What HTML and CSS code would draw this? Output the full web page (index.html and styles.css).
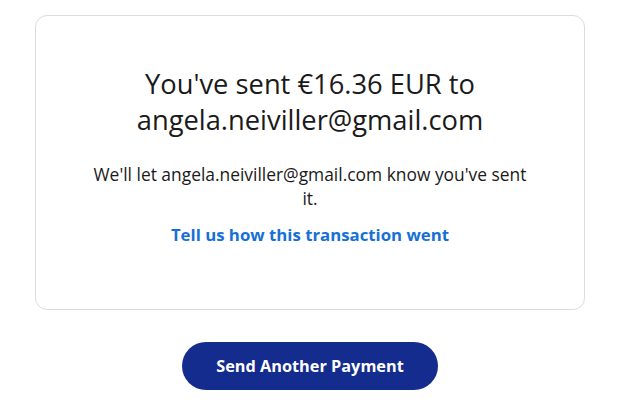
FILE: index.html
```html
<!DOCTYPE html>
<html lang="en">
<head>
  <meta charset="UTF-8">
  <meta name="viewport" content="width=device-width, initial-scale=1.0">
  <title>Payment Sent</title>
  <link rel="stylesheet" href="styles.css">
</head>
<body>
  <div class="page">
    <div class="card">
      <h1 class="title">You've sent €16.36 EUR to angela.neiviller@gmail.com</h1>
      <p class="note">We'll let angela.neiviller@gmail.com know you've sent it.</p>
      <a class="feedback" href="#">Tell us how this transaction went</a>
    </div>
    <div class="actions">
      <button class="send-again">Send Another Payment</button>
    </div>
  </div>
</body>
</html>
```

FILE: styles.css
```css
body {
  font-family: "Open Sans", Lato, sans-serif;
  background-color: #ffffff;
  margin: 0;
  padding: 0;
  color: #1a1a1a;
}
.page {
  padding: 15px 49px 0 35px;
}
.card {
  border: 1px solid #dcdcdc;
  border-radius: 12px;
  padding: 50px 40px 62px;
  text-align: center;
}
.title {
  font-size: 27.3px;
  font-weight: 400;
  line-height: 36px;
  margin: 0 auto 24px;
  max-width: 400px;
}
.note {
  font-size: 17.4px;
  line-height: 24px;
  margin: 0 auto 13px;
  max-width: 448px;
}
.feedback {
  display: inline-block;
  color: #1670d6;
  font-weight: 700;
  font-size: 16.8px;
  line-height: 24px;
  text-decoration: none;
}
.actions {
  display: flex;
  justify-content: center;
  padding-top: 32px;
}
.send-again {
  background-color: #142c8e;
  color: #ffffff;
  border: none;
  border-radius: 24px;
  width: 256px;
  height: 48px;
  font-family: inherit;
  font-size: 16.3px;
  font-weight: 700;
  cursor: pointer;
}
```
